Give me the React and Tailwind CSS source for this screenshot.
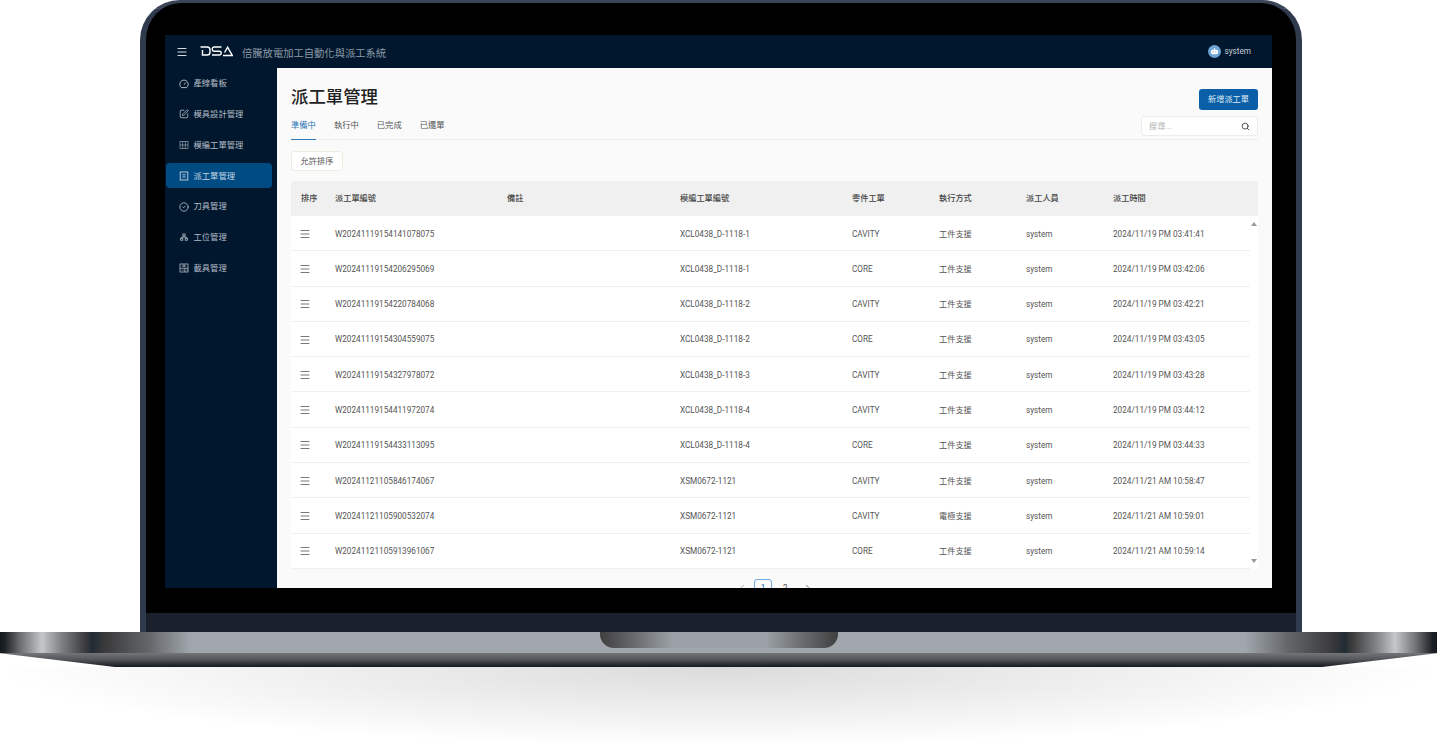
import { SquarePen, CircleCheck, Search, Menu, ChevronLeft, ChevronRight } from "lucide-react";

const cjk = "font-['Roboto','Noto_Sans_CJK_TC',sans-serif]";
const tableCols = "grid-cols-[34px_172px_173px_172px_87px_87px_87px_1fr]";

const rows = [
    ["W20241119154141078075", "XCL0438_D-1118-1", "CAVITY", "工件支援", "2024/11/19 PM 03:41:41"],
    ["W20241119154206295069", "XCL0438_D-1118-1", "CORE", "工件支援", "2024/11/19 PM 03:42:06"],
    ["W20241119154220784068", "XCL0438_D-1118-2", "CAVITY", "工件支援", "2024/11/19 PM 03:42:21"],
    ["W20241119154304559075", "XCL0438_D-1118-2", "CORE", "工件支援", "2024/11/19 PM 03:43:05"],
    ["W20241119154327978072", "XCL0438_D-1118-3", "CAVITY", "工件支援", "2024/11/19 PM 03:43:28"],
    ["W20241119154411972074", "XCL0438_D-1118-4", "CAVITY", "工件支援", "2024/11/19 PM 03:44:12"],
    ["W20241119154433113095", "XCL0438_D-1118-4", "CORE", "工件支援", "2024/11/19 PM 03:44:33"],
    ["W20241121105846174067", "XSM0672-1121", "CAVITY", "工件支援", "2024/11/21 AM 10:58:47"],
    ["W20241121105900532074", "XSM0672-1121", "CAVITY", "電極支援", "2024/11/21 AM 10:59:01"],
    ["W20241121105913961067", "XSM0672-1121", "CORE", "工件支援", "2024/11/21 AM 10:59:14"],
];

function GaugeIcon() {
    return (
        <svg width="10" height="10" viewBox="0 0 10 10" fill="none" stroke="currentColor" strokeWidth="1">
            <path d="M2.4 8.6a4.2 4.2 0 1 1 5.2 0z" />
            <path d="M5 5.800L6.600 3.600" />
        </svg>
    );
}

function GridIcon() {
    return (
        <svg width="10" height="10" viewBox="0 0 10 10" fill="none" stroke="currentColor" strokeWidth="0.7" opacity="0.85">
            <rect x="1" y="1.5" width="8" height="7" />
            <path d="M3.700 1.500v7M6.300 1.500v7M1 5h8" />
        </svg>
    );
}

function DocIcon() {
    return (
        <svg width="10" height="10" viewBox="0 0 10 10" fill="none" stroke="currentColor" strokeWidth="0.9">
            <rect x="1.2" y="1" width="7.6" height="8" />
            <path d="M3.500 3.800h3M3.500 6h3" />
        </svg>
    );
}

function TreeIcon() {
    return (
        <svg width="10" height="10" viewBox="0 0 10 10" fill="none" stroke="currentColor" strokeWidth="0.8">
            <rect x="3.9" y="2" width="2.2" height="2" />
            <rect x="1.6" y="6.2" width="2.2" height="2" />
            <rect x="6.2" y="6.2" width="2.2" height="2" />
            <path d="M5 4v1.100M2.700 6.200V5.100h4.600v1.100" />
        </svg>
    );
}

function FixtureIcon() {
    return (
        <svg width="10" height="10" viewBox="0 0 10 10" fill="none" stroke="currentColor" strokeWidth="0.8">
            <rect x="1" y="1" width="8" height="8" />
            <path d="M1 5.200h8M3 3h4M5 1v3M3 7h1.500M5.800 5.200V9M7.500 7h1.500" />
        </svg>
    );
}

const menu = [
    { label: "產線看板", icon: <GaugeIcon /> },
    { label: "模具設計管理", icon: <SquarePen size={10} strokeWidth={2} /> },
    { label: "模編工單管理", icon: <GridIcon /> },
    { label: "派工單管理", icon: <DocIcon />, active: true },
    { label: "刀具管理", icon: <CircleCheck size={10} strokeWidth={2} /> },
    { label: "工位管理", icon: <TreeIcon /> },
    { label: "載具管理", icon: <FixtureIcon /> },
];

function Logo() {
    return (
        <svg width="33" height="11" viewBox="0 0 33 11" fill="none" stroke="white" strokeWidth="1.4">
            <path d="M0.500 1h6.500c1.800 0 3 1.200 3 2.800v2.400c0 1.600-1.200 2.800-3 2.800H2.500V4" />
            <path d="M21.500 1h-7.500c-1 0-1.700.8-1.700 1.800v0.700c0 1 .7 1.700 1.700 1.700h5.500c1 0 1.700.7 1.700 1.600v.5c0 .9-.7 1.700-1.700 1.700h-7.500" />
            <path d="M23 9.500h9.300L27.600 1.200l-3 5.300" />
        </svg>
    );
}

function Avatar() {
    return (
        <svg width="13" height="13" viewBox="0 0 14 14">
            <circle cx="7" cy="7" r="7" fill="#6ea3d6" />
            <rect x="3.2" y="5" width="7.6" height="5" rx="1.6" fill="#ffffff" />
            <rect x="6.5" y="3.3" width="1" height="2" fill="#ffffff" />
            <circle cx="5.5" cy="7.3" r="0.7" fill="#6ea3d6" />
            <circle cx="8.5" cy="7.3" r="0.7" fill="#6ea3d6" />
        </svg>
    );
}

function Sidebar() {
    return (
        <aside className="flex w-[112px] shrink-0 flex-col pl-px pr-[5px] pt-[3px]">
            {menu.map((item) => (
                <div
                    key={item.label}
                    className={`mb-[5.8px] flex h-[25px] items-center gap-[4.5px] rounded-[4px] pl-[13px] text-[8.3px] ${
                        item.active ? "bg-[#004b82] text-[#c4d4e2]" : "text-[#b4bcc5]"
                    }`}
                >
                    {item.icon}
                    <span>{item.label}</span>
                </div>
            ))}
        </aside>
    );
}

function DataTable() {
    return (
        <div className="mt-[10px]">
            <div className={`grid h-[35px] ${tableCols} items-center rounded-t-[4px] bg-[#f0f0f0] pl-[10px] text-[8.2px] font-medium text-[#444444]`}>
                <span>排序</span>
                <span>派工單編號</span>
                <span>備註</span>
                <span>模編工單編號</span>
                <span>零件工單</span>
                <span>執行方式</span>
                <span>派工人員</span>
                <span>派工時間</span>
            </div>
            <div className="flex">
                <div className="flex-1">
                    {rows.map((row) => (
                        <div
                            key={row[0]}
                            className={`grid h-[35.3px] ${tableCols} items-center border-b border-[#f0f0f0] bg-white pl-[10px] pt-px text-[8.2px] text-[#555555]`}
                        >
                            <Menu size={12} strokeWidth={1.6} className="-ml-[2px] text-[#555555]" />
                            <span>{row[0]}</span>
                            <span></span>
                            <span>{row[1]}</span>
                            <span>{row[2]}</span>
                            <span>{row[3]}</span>
                            <span>system</span>
                            <span>{row[4]}</span>
                        </div>
                    ))}
                </div>
                <div className="flex w-[8px] flex-col items-center justify-between bg-white py-[6px]">
                    <div className="h-0 w-0 border-x-[3px] border-b-[4px] border-x-transparent border-b-[#999999]"></div>
                    <div className="h-0 w-0 border-x-[3px] border-t-[4px] border-x-transparent border-t-[#999999]"></div>
                </div>
            </div>
            <div className="mt-[10px] flex items-center pl-[447px] text-[8.2px] text-[#555555]">
                <ChevronLeft size={9} className="text-[#999999]" />
                <div className="ml-[7px] flex h-[18px] w-[18px] items-center justify-center rounded-[3px] border border-[#6ea8dc] text-[#0a5fa8]">1</div>
                <span className="ml-[11px]">2</span>
                <ChevronRight size={9} className="ml-[15px]" />
            </div>
        </div>
    );
}

function Main() {
    return (
        <main className="min-w-0 flex-1 bg-[#fafafa] px-[14px] pt-[14px]">
            <div className="flex items-start justify-between">
                <h1 className="mt-px text-[17.4px] font-medium leading-[28px] text-[#222222]">派工單管理</h1>
                <button className="mt-[7px] h-[21px] w-[59px] rounded-[3px] bg-[#0a5fa8] text-[8.2px] text-[#dce8f2]">新增派工單</button>
            </div>
            <div className="relative mt-[2px] flex h-[27px] border-b border-[#ececec]">
                <div className="flex gap-[18px] text-[8.3px] leading-[25px] text-[#555555]">
                    <span className="h-[27px] border-b-[1.5px] border-[#2c78b8] text-[#2c78b8]">準備中</span>
                    <span>執行中</span>
                    <span>已完成</span>
                    <span>已還單</span>
                </div>
                <div className="absolute right-0 top-[3px] flex h-[20px] w-[117px] items-center justify-between rounded-[3px] border border-[#ececec] bg-white px-[7px] text-[8.2px] text-[#b5b5b5]">
                    <span>搜尋...</span>
                    <Search size={9} strokeWidth={2.4} className="text-[#444444]" />
                </div>
            </div>
            <button className="mt-[11px] block h-[20px] w-[52px] rounded-[3px] border border-[#f1ebe2] bg-white text-[8.2px] text-[#555555]">允許排序</button>
            <DataTable />
        </main>
    );
}

function Screen() {
    return (
        <div className={`flex h-[553px] flex-col overflow-hidden bg-[#00172d] ${cjk}`}>
            <header className="flex h-[33px] shrink-0 items-center justify-between pl-[11px] pr-[21px]">
                <div className="flex items-center">
                    <Menu size={12} strokeWidth={2.2} className="text-[#d5dae0]" />
                    <div className="ml-[12px]"><Logo /></div>
                    <span className="ml-[9px] mt-[4px] text-[10.3px] text-[#8b97a5]">倍騰放電加工自動化與派工系統</span>
                </div>
                <div className="flex items-center gap-[3px] text-[8.2px] text-[#c6ced6]">
                    <Avatar />
                    <span>system</span>
                </div>
            </header>
            <div className="flex min-h-0 flex-1">
                <Sidebar />
                <Main />
            </div>
        </div>
    );
}

function Notch() {
    return <div className="mx-auto h-[16px] w-[238px] rounded-b-[14px] bg-[linear-gradient(90deg,#3f3f40_0%,#6a6c6e_15%,#9aa0a5_30%,#9aa0a5_70%,#6a6c6e_85%,#3f3f40_100%)]"></div>;
}

export default function App() {
    return (
        <div className="h-[746px] w-[1437px] overflow-hidden bg-white">
            <div className="ml-[140px] mr-[135px] flex h-[632px] flex-col overflow-hidden rounded-t-[40px] border-x-[6px] border-t-[3px] border-x-[#2f3b4d] border-t-[#3b4557] bg-[#1a212d]">
                <div className="h-[610px] rounded-t-[36px] bg-black pl-[19px] pr-[24px] pt-[32px]">
                    <Screen />
                </div>
            </div>
            <div className="h-[21px] bg-[linear-gradient(90deg,#11181f_0,#1f2226_5px,#6b6d70_20px,#c4c8cb_42px,#7d7f82_62px,#3c3c3d_85px,#222c35_92px,#3a3a3b_105px,#65686b_150px,#a0a6ac_190px,#a0a6ac_1245px,#65686b_1287px,#3a3a3b_1332px,#222c35_1345px,#3c3c3d_1352px,#7d7f82_1375px,#c4c8cb_1395px,#6b6d70_1417px,#1f2226_1432px,#11181f_1437px)]">
                <Notch />
            </div>
            <div className="h-[14px] bg-[linear-gradient(180deg,#737578_0%,#54575b_45%,#15181d_100%)] [clip-path:polygon(0_0,100%_0,100%_2%,92%_100%,8%_100%,0_2%)]"></div>
            <div className="h-[79px] bg-[radial-gradient(ellipse_50%_100%_at_50%_0%,#dbdbdb_0%,#ebebeb_45%,#ffffff_100%)]"></div>
        </div>
    );
}
